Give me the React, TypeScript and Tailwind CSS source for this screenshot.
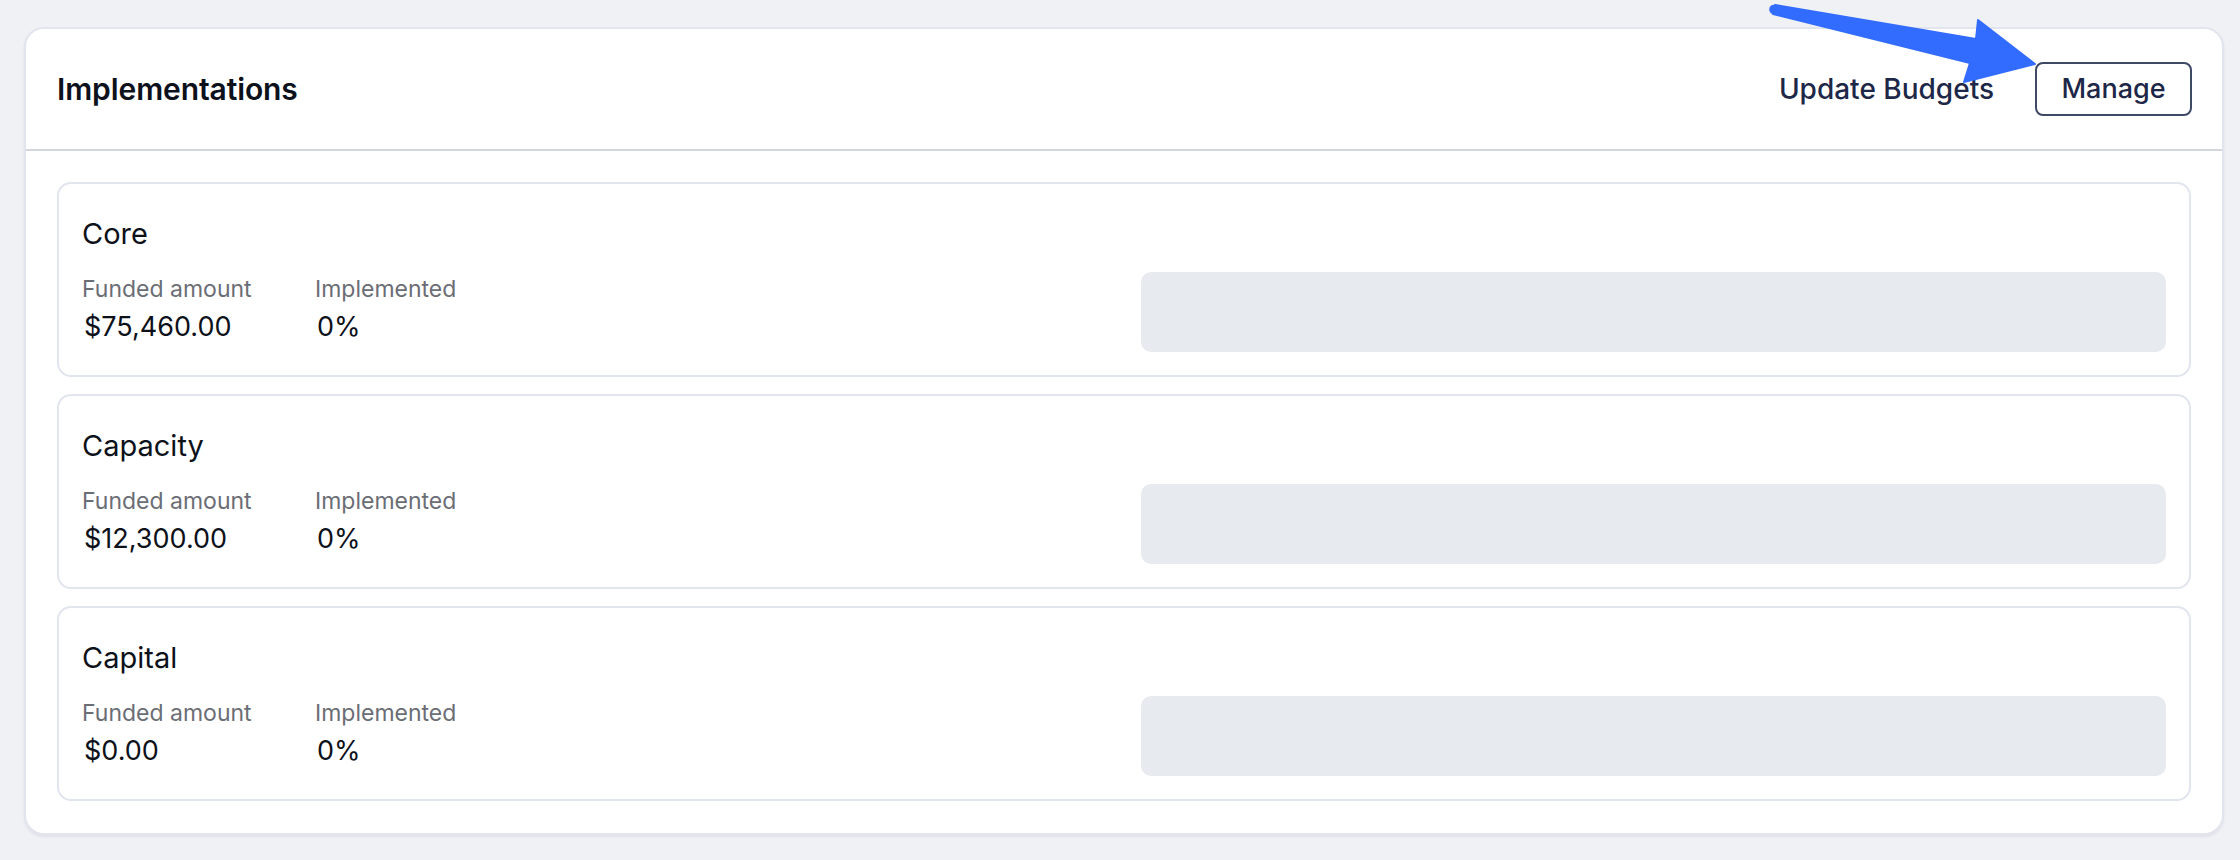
import React from "react";

const items = [
  { name: "Core", amount: "$75,460.00", pct: "0%" },
  { name: "Capacity", amount: "$12,300.00", pct: "0%" },
  { name: "Capital", amount: "$0.00", pct: "0%" },
];

function ItemCard({ name, amount, pct }: { name: string; amount: string; pct: string }) {
  return (
    <div className="h-[195px] rounded-[14px] border-2 border-[#e1e5ee] bg-white px-[23px] pt-[33px] pb-[23px] flex gap-[34px]">
      <div className="flex-1 flex flex-col">
        <div className="text-[29px] leading-[34px] text-[#0d111a]">{name}</div>
        <div className="mt-[23px] flex">
          <div className="w-[233px] flex flex-col">
            <div className="text-[23px] leading-[30px] text-[#6b6d75]">Funded amount</div>
            <div className="mt-[7px] text-[27px] leading-[32px] text-[#0d111a] pl-[2px]">{amount}</div>
          </div>
          <div className="flex flex-col">
            <div className="text-[23px] leading-[30px] text-[#6b6d75]">Implemented</div>
            <div className="mt-[7px] text-[27px] leading-[32px] text-[#0d111a] pl-[2px]">{pct}</div>
          </div>
        </div>
      </div>
      <div className="flex-1 flex items-end">
        <div className="h-[80px] w-full rounded-[10px] bg-[#e7eaef]" />
      </div>
    </div>
  );
}

export default function App() {
  return (
    <div
      className="relative min-h-screen bg-[#f0f1f5] pt-[27px] pl-[24px] pr-[16px] pb-[25px]"
      style={{ fontFamily: "Inter, 'Noto Sans', sans-serif" }}
    >
      <div className="rounded-[20px] border-2 border-[#e2e5ed] bg-white shadow-[0_2px_3px_rgba(40,50,80,0.08)]">
        <div className="h-[120px] flex items-center justify-between pl-[31px] pr-[30px]">
          <h1 className="text-[30px] font-semibold text-[#0c111c] tracking-[-0.1px]">Implementations</h1>
          <div className="flex items-center gap-[41px]">
            <button className="text-[28px] font-medium text-[#1d2747]">Update Budgets</button>
            <button className="h-[54px] w-[157px] rounded-[8px] border-2 border-[#3e4966] text-[27px] font-medium text-[#1d2747]">
              Manage
            </button>
          </div>
        </div>
        <div className="h-[2px] bg-[#d3d6df]" />
        <div className="px-[31px] pt-[31px] pb-[32px] flex flex-col gap-[17px]">
          {items.map((it) => (
            <ItemCard key={it.name} {...it} />
          ))}
        </div>
      </div>
      <svg
        className="pointer-events-none absolute left-0 top-0"
        width="2240"
        height="120"
        viewBox="0 0 2240 120"
      >
        <path
          d="M1775,5 L1976,39 L1978,20 L2035,64 L1964,82 L1970,63 L1773,14 Z"
          fill="#326cff"
          stroke="#326cff"
          strokeWidth="2"
          strokeLinejoin="round"
        />
        <circle cx="1774" cy="9.5" r="4.8" fill="#326cff" />
      </svg>
    </div>
  );
}
